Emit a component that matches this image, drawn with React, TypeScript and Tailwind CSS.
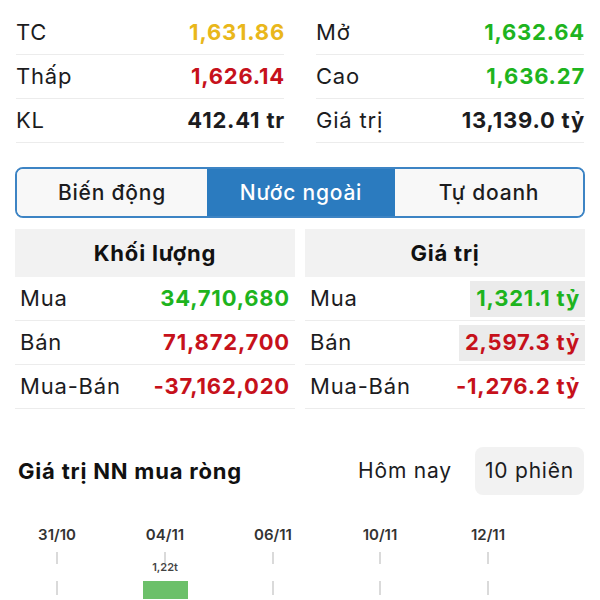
import React from "react";

const stats = [
  [
    { label: "TC", value: "1,631.86", color: "text-[#e9b71b]" },
    { label: "Thấp", value: "1,626.14", color: "text-[#c6111b]" },
    { label: "KL", value: "412.41 tr", color: "text-[#1c1c1e]" },
  ],
  [
    { label: "Mở", value: "1,632.64", color: "text-[#1eb41e]" },
    { label: "Cao", value: "1,636.27", color: "text-[#1eb41e]" },
    { label: "Giá trị", value: "13,139.0 tỷ", color: "text-[#1c1c1e]" },
  ],
];

const volume = [
  { label: "Mua", value: "34,710,680", color: "text-[#1eb41e]", hl: false },
  { label: "Bán", value: "71,872,700", color: "text-[#c6111b]", hl: false },
  { label: "Mua-Bán", value: "-37,162,020", color: "text-[#c6111b]", hl: false },
];

const amount = [
  { label: "Mua", value: "1,321.1 tỷ", color: "text-[#1eb41e]", hl: true },
  { label: "Bán", value: "2,597.3 tỷ", color: "text-[#c6111b]", hl: true },
  { label: "Mua-Bán", value: "-1,276.2 tỷ", color: "text-[#c6111b]", hl: false },
];

const dates = [
  { d: "31/10", x: 57 },
  { d: "04/11", x: 165 },
  { d: "06/11", x: 273 },
  { d: "10/11", x: 380 },
  { d: "12/11", x: 488 },
];

function FlowTable({ title, rows }: { title: string; rows: typeof volume }) {
  return (
    <div>
      <div className="h-[48px] bg-[#f2f2f2] flex items-center justify-center text-[22px] font-bold text-[#111]">
        {title}
      </div>
      {rows.map((r) => (
        <div
          key={r.label}
          className="h-[44px] flex items-center justify-between border-b border-[#ececec] pl-[5px]"
        >
          <span className="text-[22px] text-[#1c1c1e]">{r.label}</span>
          <span
            className={`text-[22px] font-bold ${r.color} h-[36px] flex items-center pl-[6px] pr-[5px] ${
              r.hl ? "bg-[#ebebeb]" : ""
            }`}
          >
            {r.value}
          </span>
        </div>
      ))}
    </div>
  );
}

export default function App() {
  return (
    <div className="w-[600px] h-[600px] overflow-hidden bg-white font-['Inter',sans-serif] tracking-[0.05em] text-[#1c1c1e]">
      <div className="grid grid-cols-2 gap-x-8 px-4 pt-[11px]">
        {stats.map((col, i) => (
          <div key={i}>
            {col.map((s) => (
              <div
                key={s.label}
                className="h-[44px] flex items-center justify-between border-b border-[#ececec]"
              >
                <span className="text-[22px]">{s.label}</span>
                <span className={`text-[22px] font-bold -mr-[1px] ${s.color}`}>{s.value}</span>
              </div>
            ))}
          </div>
        ))}
      </div>

      <div className="mx-[15px] mt-6 h-[51px] flex border-2 border-[#3d84c4] rounded-lg overflow-hidden">
        <div className="w-[190px] flex items-center justify-center bg-[#f8f8f8] text-[21px] font-medium">
          Biến động
        </div>
        <div className="w-[188px] flex items-center justify-center bg-[#2b7bbf] text-white text-[21px] font-medium">
          Nước ngoài
        </div>
        <div className="flex-1 flex items-center justify-center bg-[#f8f8f8] text-[21px] font-medium">
          Tự doanh
        </div>
      </div>

      <div className="grid grid-cols-2 gap-[10px] px-[15px] mt-[11px]">
        <FlowTable title="Khối lượng" rows={volume} />
        <FlowTable title="Giá trị" rows={amount} />
      </div>

      <div className="flex items-center justify-between mt-[38px] pl-[18px] pr-4">
        <span className="text-[22px] font-bold text-[#111]">Giá trị NN mua ròng</span>
        <div className="flex items-center gap-[13px]">
          <span className="px-[10px] text-[21px]">Hôm nay</span>
          <span className="h-[48px] flex items-center px-[10px] rounded-lg bg-[#f2f2f2] text-[21px]">
            10 phiên
          </span>
        </div>
      </div>

      <svg width="600" height="104" className="block tracking-normal">
        {dates.map((t) => (
          <g key={t.d}>
            <text
              x={t.x}
              y={45}
              textAnchor="middle"
              fontSize="15"
              fontWeight="600"
              fill="#333"
              fontFamily="Inter, sans-serif"
            >
              {t.d}
            </text>
            <line x1={t.x} y1={57} x2={t.x} y2={69} stroke="#b5b5b5" strokeWidth="1" />
            <line x1={t.x} y1={86} x2={t.x} y2={100} stroke="#b5b5b5" strokeWidth="1" />
          </g>
        ))}
        <text
          x={165}
          y={76}
          textAnchor="middle"
          fontSize="11"
          fontWeight="600"
          fill="#444"
          fontFamily="Inter, sans-serif"
        >
          1,22t
        </text>
        <rect x={143} y={86} width={45} height={20} fill="#6cc06a" />
      </svg>
    </div>
  );
}
